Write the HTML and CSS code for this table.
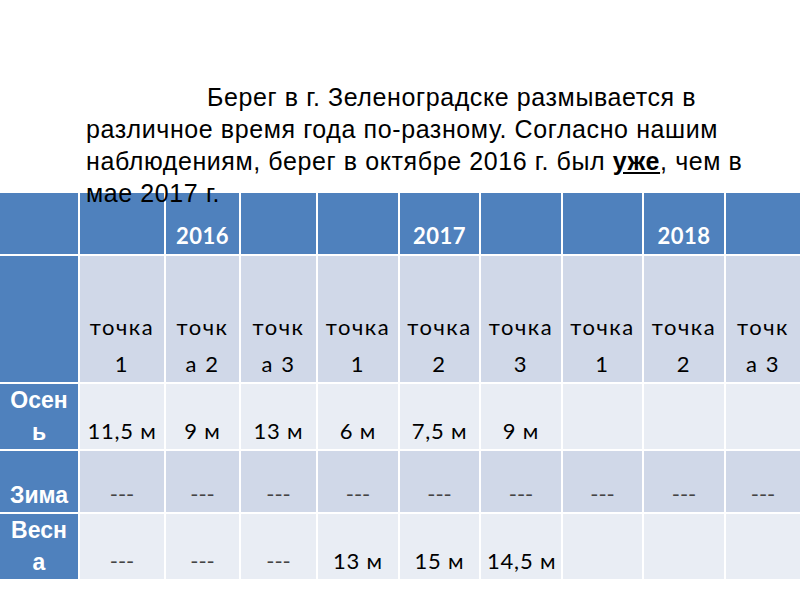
FILE: index.html
```html
<!DOCTYPE html>
<html lang="ru">
<head>
<meta charset="utf-8">
<title>Берег</title>
<link rel="stylesheet" href="styles.css">
</head>
<body>
<div class="slide">
  <p class="intro">Берег в г. Зеленоградске размывается в различное время года по-разному. Согласно нашим наблюдениям, берег в октябре 2016 г. был <b class="em">уже</b>, чем в мае 2017 г.</p>
  <table class="data">
    <colgroup>
      <col class="c1"><col class="c2"><col class="c3"><col class="c4"><col class="c5">
      <col class="c6"><col class="c7"><col class="c8"><col class="c9"><col class="c10">
    </colgroup>
    <tr class="head">
      <th></th><th></th><th>2016</th><th></th><th></th><th>2017</th><th></th><th></th><th>2018</th><th></th>
    </tr>
    <tr class="points">
      <th class="label"></th>
      <td>точка 1</td><td>точка 2</td><td>точка 3</td>
      <td>точка 1</td><td>точка 2</td><td>точка 3</td>
      <td>точка 1</td><td>точка 2</td><td>точка 3</td>
    </tr>
    <tr class="odd r3">
      <th class="label">Осень</th>
      <td>11,5 м</td><td>9 м</td><td>13 м</td><td>6 м</td><td>7,5 м</td><td>9 м</td><td></td><td></td><td></td>
    </tr>
    <tr class="even r4">
      <th class="label">Зима</th>
      <td class="dash">---</td><td class="dash">---</td><td class="dash">---</td><td class="dash">---</td><td class="dash">---</td><td class="dash">---</td><td class="dash">---</td><td class="dash">---</td><td class="dash">---</td>
    </tr>
    <tr class="odd r5">
      <th class="label">Весна</th>
      <td class="dash">---</td><td class="dash">---</td><td class="dash">---</td><td>13 м</td><td>15 м</td><td>14,5 м</td><td></td><td></td><td></td>
    </tr>
  </table>
</div>
</body>
</html>
```
FILE: styles.css
```css
html, body {
  margin: 0;
  padding: 0;
  background: #fff;
}
.slide {
  width: 800px;
  height: 600px;
  overflow: hidden;
  position: relative;
}
.intro {
  position: relative;
  z-index: 1;
  margin: 0 0 -18px 0;
  padding: 81px 35px 0 86px;
  font-family: "Liberation Sans", Arial, sans-serif;
  font-size: 25px;
  letter-spacing: 0.6px;
  line-height: 32px;
  text-indent: 121px;
  color: #000;
}
.em {
  text-decoration: underline;
}
.data {
  table-layout: fixed;
  border-collapse: separate;
  border-spacing: 2px;
  margin-left: -2px;
  width: 804px;
  font-family: Lato, "Open Sans", sans-serif;
  font-size: 22px;
  line-height: 37px;
  color: #000;
}
.c1 { width: 78px; }
.c2 { width: 84px; }
.c3 { width: 73px; }
.c4 { width: 75px; }
.c5 { width: 80px; }
.c6 { width: 79px; }
.c7 { width: 80px; }
.c8 { width: 79px; }
.c9 { width: 80px; }
.c10 { width: 74px; }
.data th, .data td {
  padding: 0 6px;
  text-align: center;
  vertical-align: bottom;
  overflow-wrap: anywhere;
}
.head th {
  background: #4f81bd;
  color: #fff;
  font-weight: 700;
  height: 61px;
  letter-spacing: 0.5px;
}
.points td {
  background: #d0d8e8;
  height: 126px;
  letter-spacing: 1.5px;
}
.r3 td { height: 65px; }
.r4 td { height: 61px; }
.r5 td { height: 64px; }
.odd td, .even td {
  white-space: nowrap;
  letter-spacing: 0.8px;
}
.odd td { background: #e9edf4; }
.even td { background: #d0d8e8; }
.data .label {
  background: #4f81bd;
  color: #fff;
  font-family: "Liberation Sans", Arial, sans-serif;
  font-weight: 700;
  font-size: 23px;
  line-height: 32px;
  letter-spacing: 0;
  white-space: normal;
  padding: 0 7px 1px;
}
.data .dash {
  color: #444;
  letter-spacing: 0;
}
```
